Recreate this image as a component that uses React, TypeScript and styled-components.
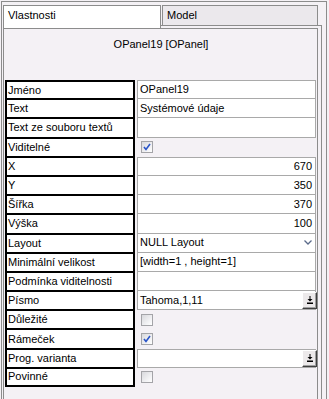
import styled, { createGlobalStyle } from 'styled-components'

const GlobalStyle = createGlobalStyle`
  html, body {
    margin: 0;
    padding: 0;
    background: #f4f1f5;
  }
  body {
    font-family: "Liberation Sans", Arial, sans-serif;
    font-size: 11px;
    color: #000;
  }
`

type Kind = 'text' | 'num' | 'check' | 'combo' | 'button'

interface Row {
  label: string
  kind: Kind
  value?: string
  checked?: boolean
}

const rows: Row[] = [
  { label: 'Jméno', kind: 'text', value: 'OPanel19' },
  { label: 'Text', kind: 'text', value: 'Systémové údaje' },
  { label: 'Text ze souboru textů', kind: 'text', value: '' },
  { label: 'Viditelné', kind: 'check', checked: true },
  { label: 'X', kind: 'num', value: '670' },
  { label: 'Y', kind: 'num', value: '350' },
  { label: 'Šířka', kind: 'num', value: '370' },
  { label: 'Výška', kind: 'num', value: '100' },
  { label: 'Layout', kind: 'combo', value: 'NULL Layout' },
  { label: 'Minimální velikost', kind: 'text', value: '[width=1 , height=1]' },
  { label: 'Podmínka viditelnosti', kind: 'text', value: '' },
  { label: 'Písmo', kind: 'button', value: 'Tahoma,1,11' },
  { label: 'Důležité', kind: 'check', checked: false },
  { label: 'Rámeček', kind: 'check', checked: true },
  { label: 'Prog. varianta', kind: 'button', value: '' },
  { label: 'Povinné', kind: 'check', checked: false },
]

function CheckMark() {
  return (
    <svg width="8" height="8" viewBox="0 0 8 8">
      <path d="M1 4 L3 6.5 L7 1" fill="none" stroke="#2a54c8" strokeWidth="1.6" />
    </svg>
  )
}

function Chevron() {
  return (
    <svg width="8" height="5" viewBox="0 0 8 5">
      <path d="M0.5 0.5 L4 4 L7.5 0.5" fill="none" stroke="#5a6a8a" strokeWidth="1.3" />
    </svg>
  )
}

function DownToBar() {
  return (
    <svg width="6" height="8" viewBox="0 0 6 8">
      <rect x="2.5" y="0" width="1" height="3" fill="#000" />
      <path d="M0.5 3 L5.5 3 L3 5.5 Z" fill="#000" />
      <rect x="0" y="6.5" width="6" height="1.5" fill="#000" />
    </svg>
  )
}

function App() {
  return (
    <>
      <GlobalStyle />
      <Window>
        <TabBar>
          <Tab $active>Vlastnosti</Tab>
          <Tab>Model</Tab>
        </TabBar>
        <Panel>
          <Inner>
            <Heading>OPanel19 [OPanel]</Heading>
            <Table>
              {rows.map((r, i) => {
                const prev = rows[i - 1]
                const boxTop = !prev || prev.kind === 'check'
                return [
                  <Label key={`l${i}`} $first={i === 0} $last={i === rows.length - 1}>
                    {r.label}
                  </Label>,
                  r.kind === 'check' ? (
                    <CheckCell key={`v${i}`}>
                      <CheckBox>{r.checked && <CheckMark />}</CheckBox>
                    </CheckCell>
                  ) : (
                    <Field key={`v${i}`} $top={boxTop} $align={r.kind === 'num' ? 'right' : 'left'}>
                      <FieldText>{r.value}</FieldText>
                      {r.kind === 'combo' && (
                        <ComboArrow>
                          <Chevron />
                        </ComboArrow>
                      )}
                      {r.kind === 'button' && (
                        <PickButton>
                          <DownToBar />
                        </PickButton>
                      )}
                    </Field>
                  ),
                ]
              })}
            </Table>
          </Inner>
        </Panel>
      </Window>
    </>
  )
}

const Window = styled.div`
  box-sizing: border-box;
  width: 326px;
  height: 398px;
  margin: 1px 0 0 1px;
  padding: 3px 4px 0 1px;
  border: 1px solid #8c8c8c;
  border-bottom: none;
  display: flex;
  flex-direction: column;
  overflow: hidden;
`

const TabBar = styled.div`
  display: flex;
  height: 20px;
  align-items: flex-start;
`

const Tab = styled.div<{ $active?: boolean }>`
  box-sizing: border-box;
  position: relative;
  z-index: ${(p) => (p.$active ? 2 : 0)};
  width: ${(p) => (p.$active ? '158px' : '156px')};
  height: ${(p) => (p.$active ? '23px' : '21px')};
  padding: 3px 0 0 4px;
  background: ${(p) => (p.$active ? '#ffffff' : '#ebe8ec')};
  border: 1px solid #8c8c8c;
  border-bottom: ${(p) => (p.$active ? 'none' : '1px solid #8c8c8c')};
  margin-right: 1px;
  line-height: 13px;
`

const Panel = styled.div`
  box-sizing: border-box;
  flex: 1;
  width: 319px;
  border: 1px solid #8c8c8c;
  border-bottom: none;
  padding-top: 2px;
  background: #f4f1f5;
`

const Inner = styled.div`
  box-sizing: border-box;
  width: 314px;
  height: 100%;
  border-top: 1px solid #8c8c8c;
  border-right: 1px solid #8c8c8c;
  padding-left: 1px;
  position: relative;
  z-index: 3;
`

const Heading = styled.div`
  box-sizing: border-box;
  height: 51px;
  padding-top: 9px;
  line-height: 13px;
  text-align: center;
`

const Table = styled.div`
  display: grid;
  grid-template-columns: 130px 179px;
  grid-auto-rows: 19.2px;
  column-gap: 2px;
`

const Label = styled.div<{ $first?: boolean; $last?: boolean }>`
  box-sizing: border-box;
  display: flex;
  align-items: center;
  padding: 0 0 0 1px;
  line-height: 13px;
  background: #ffffff;
  border: 1px solid #000;
  border-left-width: 2px;
  border-right-width: 2px;
  border-top-width: ${(p) => (p.$first ? '2px' : '1px')};
  border-bottom-width: ${(p) => (p.$last ? '2px' : '1px')};
  white-space: nowrap;
`

const Field = styled.div<{ $top?: boolean; $align: 'left' | 'right' }>`
  box-sizing: border-box;
  display: flex;
  align-items: center;
  padding: 0 2px 0 2px;
  line-height: 13px;
  background: #ffffff;
  border: 1px solid #a9a9a9;
  border-top-width: ${(p) => (p.$top ? '1px' : '0')};
  text-align: ${(p) => p.$align};
  white-space: nowrap;
`

const FieldText = styled.span`
  flex: 1;
  padding-right: 1px;
`

const ComboArrow = styled.span`
  display: flex;
  align-items: center;
  padding: 0 1px 0 4px;
`

const PickButton = styled.span`
  box-sizing: border-box;
  display: flex;
  align-items: center;
  justify-content: center;
  width: 15px;
  height: 17px;
  margin: 0 -4px 0 0;
  background: #ece9ea;
  border: 1px solid;
  border-color: #ffffff #404040 #404040 #ffffff;
  box-shadow: inset -1px -1px 0 #a0a0a0;
`

const CheckCell = styled.div`
  display: flex;
  align-items: center;
  padding: 0 0 0 4px;
`

const CheckBox = styled.span`
  box-sizing: border-box;
  display: flex;
  align-items: center;
  justify-content: center;
  width: 12px;
  height: 12px;
  border: 1px solid #a4a4a8;
  background: linear-gradient(135deg, #d8d8dc 0%, #f4f4f6 70%, #ffffff 100%);
`

export default App
